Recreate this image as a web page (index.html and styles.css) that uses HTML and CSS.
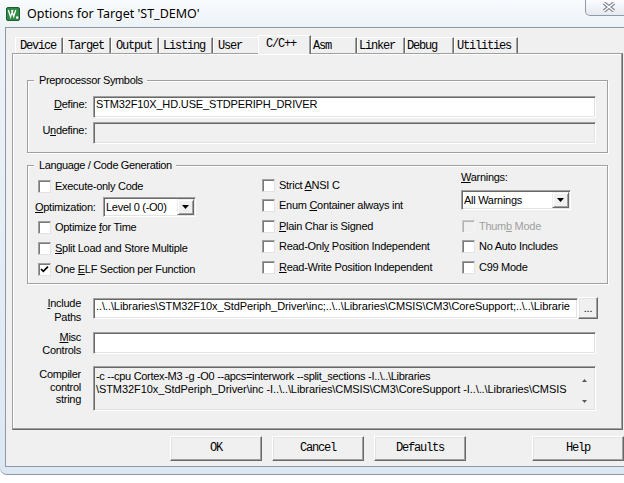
FILE: index.html
```html
<!DOCTYPE html>
<html>
<head>
<meta charset="utf-8">
<title>Options for Target 'ST_DEMO'</title>
<link rel="stylesheet" href="styles.css">
</head>
<body>
<div class="screen">
  <div class="window">
    <div class="titlebar">
      <svg class="app-icon" viewBox="0 0 14 14" width="14" height="14">
        <rect x="0.5" y="0.5" width="13" height="13" rx="1.5" fill="#2f8a45" stroke="#1b5e2b"/>
        <path d="M2.3 3 L4.6 10 L6.9 3 M5.6 3 L7.7 9.4 L9.8 3" fill="none" stroke="#fff" stroke-width="1.3"/>
        <circle cx="11.2" cy="10.6" r="1.3" fill="#fff"/>
      </svg>
      <span class="title">Options for Target 'ST_DEMO'</span>
      <div class="close">
        <svg width="14" height="10" viewBox="0 0 14 10">
          <path d="M2 1 L12 9 M12 1 L2 9" stroke="#7c8591" stroke-width="3.6"/>
          <path d="M2 1 L12 9 M12 1 L2 9" stroke="#fff" stroke-width="1.5"/>
        </svg>
      </div>
    </div>
    <div class="frame">
      <div class="client">
        <div class="tabs">
          <div class="tab t-device">Device</div>
          <div class="tab t-target">Target</div>
          <div class="tab t-output">Output</div>
          <div class="tab t-listing">Listing</div>
          <div class="tab t-user">User</div>
          <div class="tab active t-cc">C/C++</div>
          <div class="tab t-asm">Asm</div>
          <div class="tab t-linker">Linker</div>
          <div class="tab t-debug">Debug</div>
          <div class="tab t-util">Utilities</div>
        </div>
        <div class="panel">
          <div class="group pre">
            <span class="group-title">Preprocessor Symbols</span>
            <div class="flabel"><u>D</u>efine:</div>
            <div class="field">STM32F10X_HD.USE_STDPERIPH_DRIVER</div>
            <div class="flabel">U<u>n</u>define:</div>
            <div class="field disabled"></div>
          </div>

          <div class="group lang">
            <span class="group-title">Language / Code Generation</span>
            <div class="col col-left">
              <div class="cb"><span class="box"></span><span>Execute-only Code</span></div>
              <div class="opt-row">
                <span class="opt-label"><u>O</u>ptimization:</span>
                <div class="select sel-level">
                  <span class="sel-text">Level 0 (-O0)</span>
                  <span class="sel-btn"><svg width="7" height="4" viewBox="0 0 7 4"><polygon points="0,0 7,0 3.5,4" fill="#000"/></svg></span>
                </div>
              </div>
              <div class="cb"><span class="box"></span><span>Optimize <u>f</u>or Time</span></div>
              <div class="cb"><span class="box"></span><span><u>S</u>plit Load and Store Multiple</span></div>
              <div class="cb"><span class="box checked"><svg width="11" height="11" viewBox="0 0 11 11"><path d="M2 5 L4.3 7.4 L9 2.6" fill="none" stroke="#000" stroke-width="1.7"/></svg></span><span>One <u>E</u>LF Section per Function</span></div>
            </div>
            <div class="col col-mid">
              <div class="cb"><span class="box"></span><span>Strict <u>A</u>NSI C</span></div>
              <div class="cb"><span class="box"></span><span>Enum <u>C</u>ontainer always int</span></div>
              <div class="cb"><span class="box"></span><span><u>P</u>lain Char is Signed</span></div>
              <div class="cb"><span class="box"></span><span>Read-Onl<u>y</u> Position Independent</span></div>
              <div class="cb"><span class="box"></span><span><u>R</u>ead-Write Position Independent</span></div>
            </div>
            <div class="col col-right">
              <div class="warn-label"><u>W</u>arnings:</div>
              <div class="select sel-warn">
                <span class="sel-text">All Warnings</span>
                <span class="sel-btn"><svg width="7" height="4" viewBox="0 0 7 4"><polygon points="0,0 7,0 3.5,4" fill="#000"/></svg></span>
              </div>
              <div class="right-rows">
                <div class="cb dis"><span class="box disabled"></span><span>Thum<u>b</u> Mode</span></div>
                <div class="cb"><span class="box"></span><span>No Auto Includes</span></div>
                <div class="cb"><span class="box"></span><span>C99 Mode</span></div>
              </div>
            </div>
          </div>

          <div class="paths">
            <div class="plabel lbl-inc"><u>I</u>nclude<br>Paths</div>
            <div class="inc-row">
              <div class="field inc-field">..\..\Libraries\STM32F10x_StdPeriph_Driver\inc;..\..\Libraries\CMSIS\CM3\CoreSupport;..\..\Librarie</div>
              <div class="raised ell">...</div>
            </div>
            <div class="plabel lbl-misc"><u>M</u>isc<br>Controls</div>
            <div class="field"></div>
            <div class="plabel lbl-comp">Compiler<br>control<br>string</div>
            <div class="field comp-field">
              <div class="comp-lines">
                <div>-c --cpu Cortex-M3 -g -O0 --apcs=interwork --split_sections -I..\..\Libraries</div>
                <div class="wide">\STM32F10x_StdPeriph_Driver\inc -I..\..\Libraries\CMSIS\CM3\CoreSupport -I..\..\Libraries\CMSIS</div>
              </div>
              <div class="vscroll">
                <svg width="5" height="3" viewBox="0 0 5 3"><polygon points="2.5,0 5,3 0,3" fill="#5a5a5a"/></svg>
                <svg width="5" height="3" viewBox="0 0 5 3"><polygon points="0,0 5,0 2.5,3" fill="#5a5a5a"/></svg>
              </div>
            </div>
          </div>
        </div>
        <div class="buttons">
          <div class="raised btn">OK</div>
          <div class="raised btn">Cancel</div>
          <div class="raised btn">Defaults</div>
          <div class="raised btn help">Help</div>
        </div>
      </div>
    </div>
  </div>
</div>
</body>
</html>
```

FILE: styles.css
```css
* { box-sizing: border-box; }
html, body { margin: 0; padding: 0; }
body {
  background: #fff;
  font-family: "Liberation Sans", Arial, sans-serif;
  font-size: 11px;
  line-height: 13px;
  letter-spacing: -0.28px;
  color: #000;
}
.screen { width: 624px; height: 483px; overflow: hidden; }

.window {
  width: 640px;
  height: 475px;
  display: flex;
  flex-direction: column;
  background: linear-gradient(180deg, #f9fbfd 0%, #eef3f8 5%, #e3ecf5 60%, #dde7f2 100%);
  border-bottom: 1px solid #8a96a3;
  border-bottom-left-radius: 7px;
}

/* title bar */
.titlebar {
  height: 27px;
  flex: none;
  display: flex;
  align-items: center;
  padding-left: 6px;
}
.app-icon { flex: none; display: block; }
.title {
  margin-left: 7px;
  font-family: "Noto Sans", sans-serif;
  font-size: 12.5px;
  letter-spacing: 0;
  color: #000;
  text-shadow: 0 0 6px #fff, 0 0 3px #fff;
}
.close {
  margin-left: auto;
  margin-right: 8px;
  align-self: flex-start;
  width: 47px;
  height: 17px;
  margin-top: -1px;
  border: 1px solid #8e9aa8;
  border-top: none;
  border-bottom-left-radius: 5px;
  background: linear-gradient(#fcfdfe, #e5eaf0);
  display: flex;
  align-items: center;
  justify-content: center;
}
.close svg { display: block; }

/* frame + client */
.frame { flex: 1; padding: 0 0 7px 5px; }
.client {
  height: 440px;
  background: #f0f0f0;
  border: 1px solid #8d99a7;
  border-right: none;
  padding-left: 6px;
  display: flex;
  flex-direction: column;
}

/* tabs */
.tabs {
  height: 25px;
  flex: none;
  display: flex;
  align-items: flex-end;
  padding-left: 3px;
}
.tab {
  height: 16px;
  flex: none;
  border-top: 1px solid #fff;
  border-left: 1px solid #fff;
  border-right: 1px solid #696969;
  box-shadow: inset -1px 0 0 #a0a0a0;
  background: #f0f0f0;
  font-family: "Liberation Mono", "Courier New", monospace;
  font-size: 12px;
  letter-spacing: -1.2px;
  line-height: 14px;
  display: flex;
  align-items: center;
  white-space: nowrap;
}
.tab.active {
  height: 19px;
  margin-bottom: -1px;
  position: relative;
  z-index: 1;
  padding-bottom: 3px;
}
.t-device { width: 48px; padding-left: 4px; }
.t-target { width: 48px; padding-left: 4px; }
.t-output { width: 48px; padding-left: 4px; }
.t-listing { width: 54px; padding-left: 3px; }
.t-user { width: 45px; padding-left: 4px; border-right: none; box-shadow: none; }
.t-cc { width: 53px; padding-left: 7px; }
.t-asm { width: 46px; padding-left: 1px; }
.t-linker { width: 48px; padding-left: 1px; }
.t-debug { width: 49px; padding-left: 1px; }
.t-util { width: 64px; padding-left: 2px; }

/* panel */
.panel {
  width: 611px;
  height: 377px;
  flex: none;
  border: 1px solid #a0a0a0;
  border-right-color: #696969;
  border-bottom-color: #696969;
  box-shadow: inset -1px -1px 0 #a0a0a0, inset 1px 1px 0 #fff;
  padding-top: 26px;
  display: flex;
  flex-direction: column;
}

/* group boxes */
.group {
  position: relative;
  width: 581px;
  margin-left: 14px;
  border: 1px solid #a0a0a0;
  box-shadow: inset 1px 1px 0 #fff, 1px 1px 0 #fff;
}
.group-title {
  position: absolute;
  top: -7px;
  left: 6px;
  padding: 0 4px 0 5px;
  background: #f0f0f0;
  line-height: 13px;
  white-space: nowrap;
  letter-spacing: -0.35px;
}

.pre {
  height: 73px;
  padding: 15px 11px 0 0;
  display: grid;
  grid-template-columns: 59px 1fr;
  column-gap: 6px;
  row-gap: 4px;
  align-content: start;
}
.flabel { text-align: right; padding-top: 2px; white-space: nowrap; }

/* sunken fields */
.field {
  height: 22px;
  background: #fff;
  border: 1px solid;
  border-color: #a0a0a0 #fff #fff #a0a0a0;
  box-shadow: inset 1px 1px 0 #696969, inset -1px -1px 0 #e3e3e3;
  padding: 1px 2px 0 2px;
  white-space: nowrap;
  overflow: hidden;
  letter-spacing: -0.15px;
}
.field.disabled { background: #f0f0f0; }

.lang {
  margin-top: 12px;
  height: 119px;
  padding-left: 7px;
  display: grid;
  grid-template-columns: 227px 199px 1fr;
}
.col { display: flex; flex-direction: column; }
.col-left { padding-top: 10px; }
.col-left .cb { height: 21px; padding-left: 3px; }
.col-mid { padding-top: 9px; }
.col-mid .cb { height: 20.5px; }
.col-right { padding-top: 5px; }
.right-rows { margin-top: 6px; display: flex; flex-direction: column; }
.right-rows .cb { height: 20.5px; padding-left: 1px; }

.cb {
  display: flex;
  align-items: center;
  gap: 4px;
  white-space: nowrap;
}
.cb.dis { color: #a0a0a0; }
.box {
  width: 13px;
  height: 13px;
  flex: none;
  background: #fff;
  border: 1px solid;
  border-color: #a0a0a0 #e3e3e3 #e3e3e3 #a0a0a0;
  box-shadow: inset 1px 1px 0 #7a7a7a;
  display: flex;
  align-items: center;
  justify-content: center;
}
.box svg { display: block; }
.box.disabled {
  background: #f0f0f0;
  border-color: #c8c8c8 #f4f4f4 #f4f4f4 #c8c8c8;
  box-shadow: inset 1px 1px 0 #b4b4b4;
}

.opt-row { height: 20px; display: flex; align-items: center; }
.opt-label { width: 68px; flex: none; white-space: nowrap; }

.select {
  height: 20px;
  background: #fff;
  border: 1px solid;
  border-color: #a0a0a0 #fff #fff #a0a0a0;
  box-shadow: inset 1px 1px 0 #696969, inset -1px -1px 0 #e3e3e3;
  display: flex;
  align-items: center;
  padding: 0 1px 0 2px;
  white-space: nowrap;
}
.sel-level { width: 93px; }
.sel-warn { width: 110px; margin-top: 6px; }
.sel-text { flex: 1; }
.sel-btn {
  width: 17px;
  height: 16px;
  flex: none;
  background: #f0f0f0;
  border: 1px solid;
  border-color: #f0f0f0 #696969 #696969 #f0f0f0;
  box-shadow: inset 1px 1px 0 #fff, inset -1px -1px 0 #a0a0a0;
  display: flex;
  align-items: center;
  justify-content: center;
}
.sel-btn svg { display: block; }
.warn-label { height: 13px; white-space: nowrap; }

/* paths section */
.paths {
  margin-top: 13px;
  display: grid;
  grid-template-columns: 68px 503px;
  column-gap: 12px;
  row-gap: 8px;
  align-items: start;
}
.plabel { text-align: right; white-space: nowrap; }
.lbl-inc { line-height: 14px; margin-top: -1px; }
.lbl-misc { line-height: 13px; margin-top: -1px; }
.lbl-comp { line-height: 12.5px; margin-top: 3px; }
.inc-row { display: flex; align-items: flex-start; }
.inc-field { width: 485px; height: 21px; margin-top: 1px; flex: none; letter-spacing: -0.08px; }

.raised {
  background: #f0f0f0;
  border: 1px solid;
  border-color: #fff #696969 #696969 #fff;
  box-shadow: inset -1px -1px 0 #a0a0a0, inset 1px 1px 0 #e3e3e3;
}
.ell {
  width: 20px;
  height: 22px;
  flex: none;
  display: flex;
  align-items: center;
  justify-content: center;
  line-height: 20px;
}
.comp-field {
  height: 45px;
  margin-top: 1px;
  background: #f0f0f0;
  padding: 0;
  display: flex;
}
.comp-lines { flex: 1; overflow: hidden; padding: 3px 0 0 2px; letter-spacing: -0.3px; }
.comp-lines .wide { letter-spacing: -0.08px; }
.vscroll {
  width: 17px;
  flex: none;
  display: flex;
  flex-direction: column;
  align-items: center;
  justify-content: space-between;
  padding: 12px 4px 7px 0;
}
.vscroll svg { display: block; }

/* buttons */
.buttons {
  display: flex;
  gap: 10px;
  padding-left: 158px;
  margin-top: 6px;
}
.btn {
  width: 92px;
  height: 25px;
  flex: none;
  font-family: "Liberation Mono", "Courier New", monospace;
  font-size: 12px;
  letter-spacing: -1.2px;
  display: flex;
  align-items: center;
  justify-content: center;
}
.btn.help { margin-left: 56px; }
```
